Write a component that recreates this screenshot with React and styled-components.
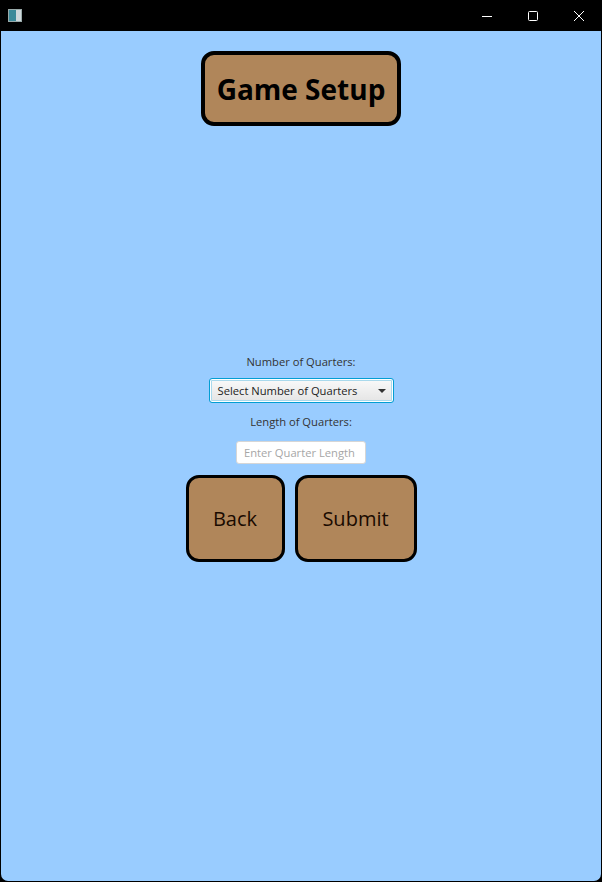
import React from 'react';
import styled, { createGlobalStyle } from 'styled-components';

const GlobalStyle = createGlobalStyle`
  html, body {
    margin: 0;
    padding: 0;
    background: #000;
  }
  body {
    font-family: "Open Sans", "Noto Sans", "Liberation Sans", sans-serif;
  }
`;

// Ventana completa
const Window = styled.div`
  width: 602px;
  height: 882px;
  display: flex;
  flex-direction: column;
  background: #000;
  border-radius: 8px;
  overflow: hidden;
`;

const TitleBar = styled.div`
  height: 31px;
  flex: none;
  display: flex;
  align-items: center;
  background: #000;
  padding-left: 8px;
`;

const AppIcon = styled.div`
  width: 12px;
  height: 11px;
  border: 1px solid #9aa;
  background: linear-gradient(90deg, #3c8a9a 0 55%, #cfd8dc 55% 100%);
  margin-top: -1px;
`;

const WinButtons = styled.div`
  margin-left: auto;
  display: flex;
  height: 100%;
`;

const WinButton = styled.div`
  width: 46px;
  height: 100%;
  display: flex;
  align-items: center;
  justify-content: center;
`;

const Content = styled.div`
  flex: 1;
  margin: 0 1px 1px 1px;
  background: #99ccff;
  border-radius: 0 0 7px 7px;
  display: grid;
  grid-template-areas: "main";
  justify-items: center;
`;

const TitleBox = styled.div`
  grid-area: main;
  align-self: start;
  margin-top: 20px;
  width: 200px;
  height: 75px;
  box-sizing: border-box;
  border: 4px solid #000;
  border-radius: 13px;
  background: #b0865a;
  display: flex;
  align-items: center;
  justify-content: center;
  font-size: 28px;
  font-weight: 700;
  color: #000;
`;

const Form = styled.div`
  grid-area: main;
  align-self: center;
  display: flex;
  flex-direction: column;
  align-items: center;
  margin-top: 4px;
`;

const Label = styled.div`
  font-size: 11.2px;
  line-height: 16px;
  color: #333;
  margin-top: ${p => p.$mt || 0}px;
  margin-bottom: ${p => p.$mb || 0}px;
`;

const Combo = styled.div`
  width: 185px;
  height: 25px;
  box-sizing: border-box;
  border: 1px solid #039ed3;
  border-radius: 3px;
  box-shadow: inset 0 0 0 1px #fff, inset 0 0 0 2px #a9d9ec;
  background: linear-gradient(#fafafa, #e4e4e4);
  display: flex;
  align-items: center;
  padding: 0 7px 0 8px;
  font-size: 11.2px;
  color: #222;
`;

const ComboText = styled.span`
  flex: 1;
`;

const Arrow = styled.span`
  width: 0;
  height: 0;
  border-left: 4px solid transparent;
  border-right: 4px solid transparent;
  border-top: 4px solid #333;
`;

const TextField = styled.input`
  width: 130px;
  height: 23px;
  box-sizing: border-box;
  border: 1px solid #d6d6d6;
  border-radius: 3px;
  background: #fff;
  padding: 0 7px;
  font-family: inherit;
  font-size: 11.2px;
  outline: none;
  margin-top: 11px;
  &::placeholder { color: #a6a6a6; }
`;

const ButtonRow = styled.div`
  display: flex;
  gap: 10px;
  margin-top: 11px;
`;

const BigButton = styled.button`
  width: ${p => p.$w}px;
  height: 87px;
  box-sizing: border-box;
  border: 3px solid #000;
  border-radius: 13px;
  background: #b0865a;
  font-family: inherit;
  font-size: 20px;
  color: #1a0a00;
  cursor: pointer;
  padding: 0;
`;

const App = () => {
  return (
    <>
      <GlobalStyle />
      <Window>
        <TitleBar>
          <AppIcon />
          <WinButtons>
            <WinButton>
              <svg width="10" height="10" viewBox="0 0 10 10">
                <path d="M0 5.5h10" stroke="#fff" strokeWidth="1" />
              </svg>
            </WinButton>
            <WinButton>
              <svg width="10" height="10" viewBox="0 0 10 10">
                <rect x="0.5" y="0.5" width="9" height="9" rx="1" fill="none" stroke="#fff" strokeWidth="1" />
              </svg>
            </WinButton>
            <WinButton>
              <svg width="10" height="10" viewBox="0 0 10 10">
                <path d="M0 0L10 10M10 0L0 10" stroke="#fff" strokeWidth="1" />
              </svg>
            </WinButton>
          </WinButtons>
        </TitleBar>
        <Content>
          <TitleBox>Game Setup</TitleBox>
          <Form>
            <Label $mb={8}>Number of Quarters:</Label>
            <Combo>
              <ComboText>Select Number of Quarters</ComboText>
              <Arrow />
            </Combo>
            <Label $mt={11}>Length of Quarters:</Label>
            <TextField placeholder="Enter Quarter Length" />
            <ButtonRow>
              <BigButton $w={99}>Back</BigButton>
              <BigButton $w={122}>Submit</BigButton>
            </ButtonRow>
          </Form>
        </Content>
      </Window>
    </>
  );
};

export default App;
